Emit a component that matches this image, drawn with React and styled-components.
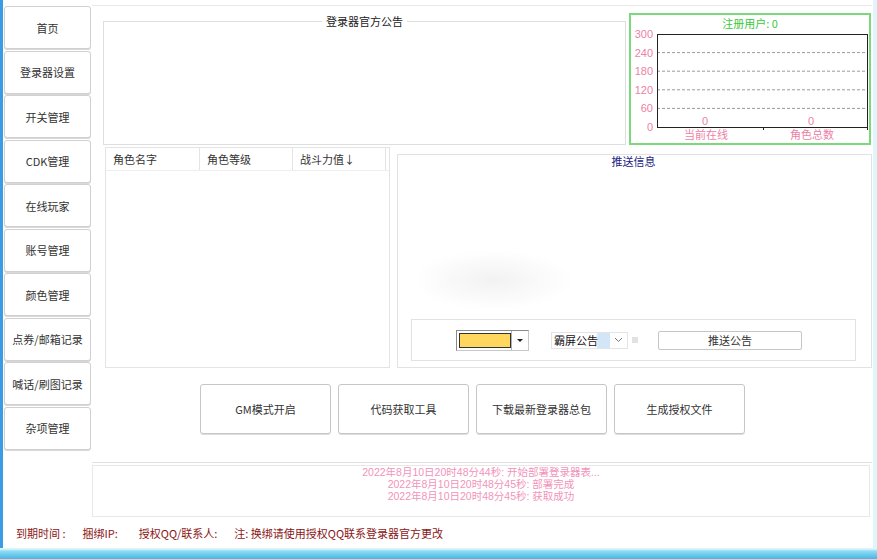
import React from "react";
import styled, { createGlobalStyle } from "styled-components";

const GlobalStyle = createGlobalStyle`
  html, body { margin: 0; padding: 0; }
  body {
    width: 877px;
    height: 559px;
    overflow: hidden;
    font-family: "Noto Sans CJK SC", "Microsoft YaHei", sans-serif;
    font-size: 11px;
    color: #333;
  }
`;

const navItems = [
  "首页",
  "登录器设置",
  "开关管理",
  "CDK管理",
  "在线玩家",
  "账号管理",
  "颜色管理",
  "点券/邮箱记录",
  "喊话/刷图记录",
  "杂项管理",
];

const actions = ["GM模式开启", "代码获取工具", "下载最新登录器总包", "生成授权文件"];

const logs = [
  "2022年8月10日20时48分44秒: 开始部署登录器表...",
  "2022年8月10日20时48分45秒: 部署完成",
  "2022年8月10日20时48分45秒: 获取成功",
];

const yTicks = [300, 240, 180, 120, 60, 0];

function RegChart() {
  const top = 3;
  const bottom = 96;
  const left = 26;
  const right = 237;
  const step = (bottom - top) / 5;
  return (
    <ChartSvg width="238" height="112" viewBox="0 0 238 112">
      {yTicks.map((v, i) => {
        const y = top + step * i;
        return (
          <g key={v}>
            {i > 0 && i < 5 && (
              <line x1={left} x2={right} y1={y} y2={y} stroke="#9a9a9a" strokeDasharray="3 2" />
            )}
            <text x="22" y={y + 4} textAnchor="end" fill="#ee7fa6" fontSize="11" fontFamily="Liberation Sans, sans-serif">
              {v}
            </text>
          </g>
        );
      })}
      <rect x={left + 0.5} y={top + 0.5} width={right - left - 1} height={bottom - top} fill="none" stroke="#222" />
      <line x1="132.5" x2="132.5" y1={bottom} y2={bottom + 3} stroke="#222" />
      <line x1={right - 0.5} x2={right - 0.5} y1={bottom} y2={bottom + 3} stroke="#222" />
      <text x="74" y="94" textAnchor="middle" fill="#ee7fa6" fontSize="11" fontFamily="Liberation Sans, sans-serif">0</text>
      <text x="180" y="94" textAnchor="middle" fill="#ee7fa6" fontSize="11" fontFamily="Liberation Sans, sans-serif">0</text>
      <text x="75" y="108" textAnchor="middle" fill="#ee7fa6" fontSize="11">当前在线</text>
      <text x="181" y="108" textAnchor="middle" fill="#ee7fa6" fontSize="11">角色总数</text>
    </ChartSvg>
  );
}

export default function App() {
  return (
    <Desktop>
      <GlobalStyle />
      <Window>
        <Body>
          <Sidebar>
            {navItems.map((n) => (
              <NavButton key={n}>{n}</NavButton>
            ))}
          </Sidebar>
          <Main>
            <Panel>
              <TopRow>
                <Notice>
                  <NoticeLegend>登录器官方公告</NoticeLegend>
                </Notice>
                <ChartBox>
                  <ChartTitle>注册用户: 0</ChartTitle>
                  <RegChart />
                </ChartBox>
              </TopRow>
              <MiddleRow>
                <Table>
                  <TableHead>
                    <HeadCell $w={94}>角色名字</HeadCell>
                    <HeadCell $w={93}>角色等级</HeadCell>
                    <HeadCell $w={93}>战斗力值↓</HeadCell>
                  </TableHead>
                </Table>
                <PushGroup>
                  <PushTitle>推送信息</PushTitle>
                  <SendBar>
                    <ColorCombo>
                      <Swatch />
                      <ComboArrow />
                    </ColorCombo>
                    <PresetSelect>
                      <PresetText>霸屏公告</PresetText>
                      <svg width="9" height="6" viewBox="0 0 9 6">
                        <path d="M1 1l3.5 3.5L8 1" fill="none" stroke="#777" strokeWidth="1" />
                      </svg>
                    </PresetSelect>
                    <TinyBox />
                    <PushButton>推送公告</PushButton>
                  </SendBar>
                </PushGroup>
              </MiddleRow>
              <ActionRow>
                {actions.map((a) => (
                  <ActionButton key={a}>{a}</ActionButton>
                ))}
              </ActionRow>
            </Panel>
            <LogBox>
              {logs.map((l, i) => (
                <LogLine key={i}>{l}</LogLine>
              ))}
            </LogBox>
          </Main>
        </Body>
        <Footer>
          <FooterItem $gap={17}>到期时间 :</FooterItem>
          <FooterItem $gap={21}>捆绑IP:</FooterItem>
          <FooterItem $gap={17}>授权QQ/联系人:</FooterItem>
          <FooterItem $gap={0}>注: 换绑请使用授权QQ联系登录器官方更改</FooterItem>
        </Footer>
      </Window>
    </Desktop>
  );
}

const Desktop = styled.div`
  width: 877px;
  height: 559px;
  background: linear-gradient(
    to bottom,
    #dff5fc 0,
    #dff5fc 549px,
    #8fdcf3 551px,
    #45b6e6 100%
  );
`;

const Window = styled.div`
  width: 870px;
  height: 548px;
  border-left: 3px solid #3a9be6;
  background: #fff;
  display: flex;
  flex-direction: column;
`;

const Body = styled.div`
  display: flex;
  height: 517px;
`;

const Sidebar = styled.div`
  width: 89px;
  box-sizing: border-box;
  padding: 6px 0 0 1px;
  display: flex;
  flex-direction: column;
  gap: 1.5px;
`;

const NavButton = styled.div`
  width: 87px;
  height: 43px;
  box-sizing: border-box;
  border: 1px solid #d0d0d0;
  border-radius: 3px;
  box-shadow: 0 1px 0 #d8d8d8;
  background: #fff;
  display: flex;
  align-items: center;
  justify-content: center;
  color: #333;
  white-space: nowrap;
`;

const Main = styled.div`
  width: 780px;
  display: flex;
  flex-direction: column;
`;

const Panel = styled.div`
  margin-top: 5px;
  height: 458px;
  box-sizing: border-box;
  border-top: 1px solid #e8e8e8;
  border-bottom: 1px solid #e2e2e2;
  display: flex;
  flex-direction: column;
`;

const TopRow = styled.div`
  display: flex;
  align-items: flex-end;
  margin-top: 7px;
  padding-left: 11px;
  gap: 3px;
`;

const Notice = styled.fieldset`
  width: 523px;
  height: 130px;
  box-sizing: border-box;
  margin: 0;
  padding: 0;
  min-width: 0;
  border: 1px solid #dedede;
`;

const NoticeLegend = styled.legend`
  margin: 0 auto;
  padding: 0 4px;
  line-height: 12px;
  color: #222;
`;

const ChartBox = styled.div`
  width: 242px;
  height: 132px;
  box-sizing: border-box;
  border: 2px solid #7bd87b;
  display: flex;
  flex-direction: column;
`;

const ChartTitle = styled.div`
  height: 16px;
  line-height: 16px;
  text-align: center;
  color: #3cc83c;
`;

const ChartSvg = styled.svg`
  display: block;
  overflow: visible;
`;

const MiddleRow = styled.div`
  display: flex;
  align-items: flex-end;
  margin-top: 2px;
  padding-left: 13px;
  gap: 7px;
`;

const Table = styled.div`
  width: 285px;
  height: 221px;
  box-sizing: border-box;
  border: 1px solid #e4e4e4;
`;

const TableHead = styled.div`
  display: flex;
  height: 23px;
  box-sizing: border-box;
  border-bottom: 1px solid #eeeeee;
`;

const HeadCell = styled.div`
  width: ${(p) => p.$w}px;
  box-sizing: border-box;
  border-right: 1px solid #e4e4e4;
  padding-left: 7px;
  display: flex;
  align-items: center;
  color: #333;
`;

const PushGroup = styled.div`
  width: 475px;
  height: 214px;
  box-sizing: border-box;
  border: 1px solid #e2e2e2;
  padding: 0 15px 6px 13px;
  display: flex;
  flex-direction: column;
  align-items: center;
  background: radial-gradient(ellipse 80px 30px at 95px 125px, #f2f2f2 0, rgba(255, 255, 255, 0) 100%);
`;

const PushTitle = styled.div`
  line-height: 12px;
  color: #1c1c84;
`;

const SendBar = styled.div`
  margin-top: auto;
  align-self: stretch;
  height: 42px;
  box-sizing: border-box;
  border: 1px solid #e2e2e2;
  display: flex;
  align-items: center;
  padding-left: 44px;
`;

const ColorCombo = styled.div`
  width: 73px;
  height: 21px;
  box-sizing: border-box;
  border: 1px solid #8a8a8a;
  border-right-color: #c8c8c8;
  border-bottom-color: #c8c8c8;
  padding: 2px 0 2px 2px;
  display: flex;
  background: #fff;
`;

const Swatch = styled.div`
  flex: 1;
  background: #ffd75e;
  border: 1px solid #333;
`;

const ComboArrow = styled.div`
  width: 16px;
  margin-top: -2px;
  margin-bottom: -2px;
  border-left: 1px solid #b0b0b0;
  display: flex;
  align-items: center;
  justify-content: center;
  &::after {
    content: "";
    border-left: 3px solid transparent;
    border-right: 3px solid transparent;
    border-top: 3px solid #222;
  }
`;

const PresetSelect = styled.div`
  margin-left: 22px;
  width: 77px;
  height: 17px;
  box-sizing: border-box;
  border: 1px solid #e4e4e4;
  display: flex;
  align-items: center;
  padding: 0 4px 0 2px;
  gap: 4px;
`;

const PresetText = styled.div`
  flex: 1;
  color: #111;
  line-height: 15px;
  background: linear-gradient(90deg, #fff 0, #fff 42px, #d3e6f7 44px, #d3e6f7 100%);
`;

const TinyBox = styled.div`
  width: 6px;
  height: 6px;
  margin-left: 4px;
  background: #e2e2e2;
`;

const PushButton = styled.div`
  margin-left: 20px;
  width: 144px;
  height: 19px;
  box-sizing: border-box;
  border: 1px solid #c6c6c6;
  border-radius: 2px;
  display: flex;
  align-items: center;
  justify-content: center;
  color: #333;
`;

const ActionRow = styled.div`
  display: flex;
  margin-top: 16px;
  padding-left: 108px;
  gap: 7px;
`;

const ActionButton = styled.div`
  width: 131px;
  height: 50px;
  box-sizing: border-box;
  border: 1px solid #c6c6c6;
  border-radius: 3px;
  box-shadow: 0 1px 0 #dddddd;
  display: flex;
  align-items: center;
  justify-content: center;
  color: #333;
`;

const LogBox = styled.div`
  margin-top: 2px;
  width: 778px;
  height: 52px;
  box-sizing: border-box;
  border: 1px solid #e8e8e8;
  text-align: center;
  color: #f293ba;
  font-family: "Liberation Sans", "Noto Sans CJK SC", sans-serif;
  font-size: 10.5px;
`;

const LogLine = styled.div`
  line-height: 12px;
  white-space: nowrap;
`;

const Footer = styled.div`
  height: 31px;
  display: flex;
  align-items: center;
  padding-left: 13px;
  color: #8a1515;
`;

const FooterItem = styled.span`
  margin-right: ${(p) => p.$gap}px;
  white-space: nowrap;
`;
